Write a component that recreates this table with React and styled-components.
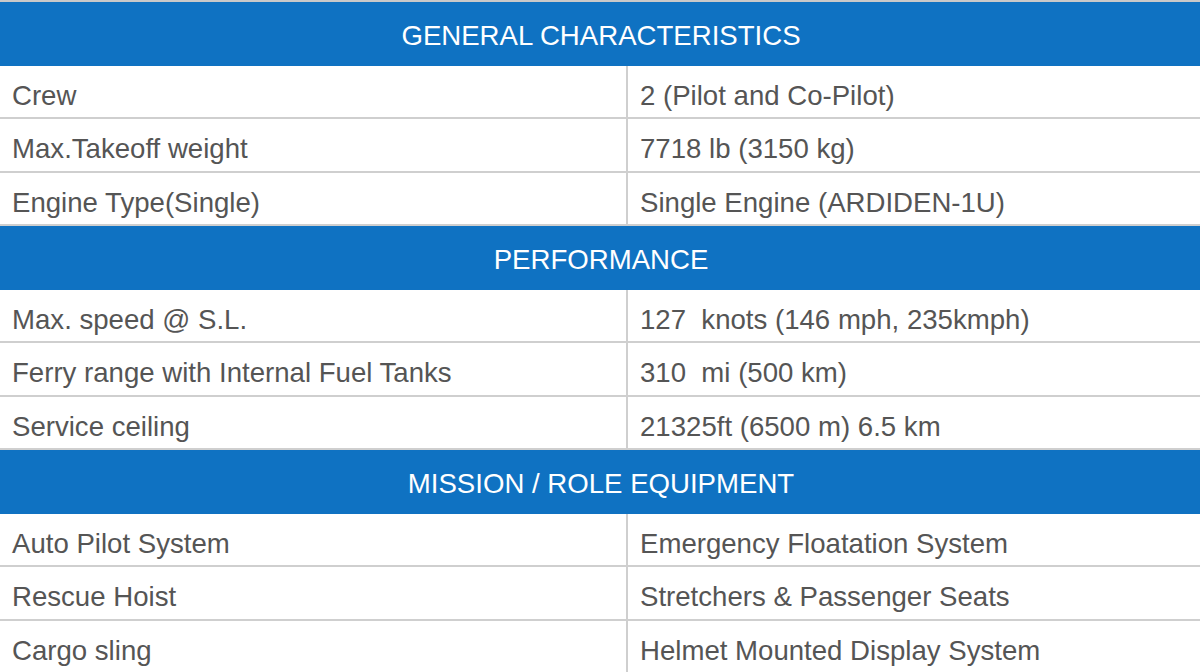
import React from 'react';
import styled, { createGlobalStyle } from 'styled-components';

const GlobalStyle = createGlobalStyle`
  html, body {
    margin: 0;
    padding: 0;
    background: #fff;
  }
  body {
    font-family: "Liberation Sans", Arial, sans-serif;
  }
`;

const sections = [
  {
    title: 'GENERAL CHARACTERISTICS',
    rows: [
      ['Crew', '2 (Pilot and Co-Pilot)'],
      ['Max.Takeoff weight', '7718 lb (3150 kg)'],
      ['Engine Type(Single)', 'Single Engine (ARDIDEN-1U)'],
    ],
  },
  {
    title: 'PERFORMANCE',
    rows: [
      ['Max. speed @ S.L.', '127\u00a0 knots (146 mph, 235kmph)'],
      ['Ferry range with Internal Fuel Tanks', '310\u00a0 mi (500 km)'],
      ['Service ceiling', '21325ft (6500 m) 6.5 km'],
    ],
  },
  {
    title: 'MISSION / ROLE EQUIPMENT',
    rows: [
      ['Auto Pilot System', 'Emergency Floatation System'],
      ['Rescue Hoist', 'Stretchers & Passenger Seats'],
      ['Cargo sling', 'Helmet Mounted Display System'],
    ],
  },
];

const Table = styled.div`
  width: 1200px;
  border-top: 2px solid #c9c9c9;
  display: flex;
  flex-direction: column;
`;

const SectionHeader = styled.div`
  height: 64px;
  box-sizing: border-box;
  padding: 4px 0 0 2px;
  background: #0f72c2;
  color: #fff;
  font-size: 27.6px;
  display: flex;
  align-items: center;
  justify-content: center;
`;

const Row = styled.div`
  display: grid;
  grid-template-columns: 628px 1fr;
  height: 53.33px;
  box-sizing: border-box;
  border-bottom: 2px solid #cfcfcf;
`;

const Cell = styled.div`
  display: flex;
  align-items: center;
  padding: 9px 12px 0;
  font-size: 27.6px;
  color: #555;
  white-space: nowrap;
  border-right: ${props => (props.first ? '2px solid #cfcfcf' : 'none')};
`;

const App = () => {
  return (
    <>
      <GlobalStyle />
      <Table>
        {sections.map(section => (
          <React.Fragment key={section.title}>
            <SectionHeader>{section.title}</SectionHeader>
            {section.rows.map(([label, value]) => (
              <Row key={label}>
                <Cell first>{label}</Cell>
                <Cell>{value}</Cell>
              </Row>
            ))}
          </React.Fragment>
        ))}
      </Table>
    </>
  );
};

export default App;
